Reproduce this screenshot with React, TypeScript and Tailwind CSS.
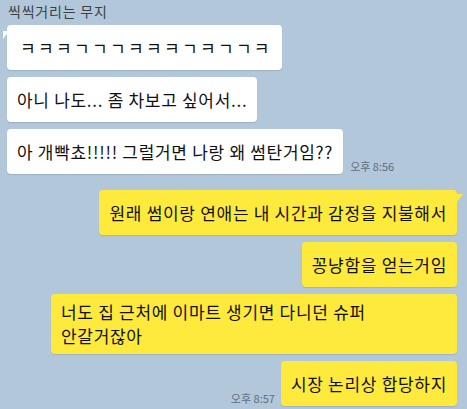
const font = { fontFamily: '"Noto Sans CJK KR", "Noto Sans", sans-serif' };

function TheirBubble({
  text,
  tail,
  className = "",
}: {
  text: string;
  tail?: boolean;
  className?: string;
}) {
  return (
    <div
      className={`relative flex h-[45px] items-center rounded-[4px] bg-white px-[10px] text-[17px] leading-[24px] tracking-[0.7px] text-[#111] shadow-[0_1px_1px_rgba(0,0,0,0.12)] ${className}`}
    >
      {tail && (
        <span className="absolute left-[-4px] top-[6px] h-0 w-0 border-r-[6px] border-t-[8px] border-r-transparent border-t-white" />
      )}
      {text}
    </div>
  );
}

function MyBubble({
  children,
  tail,
  className = "",
}: {
  children: React.ReactNode;
  tail?: boolean;
  className?: string;
}) {
  return (
    <div
      className={`relative rounded-[4px] bg-[#fee93d] px-[10px] text-[17px] leading-[24px] tracking-[0.7px] text-[#111] shadow-[0_1px_1px_rgba(0,0,0,0.1)] ${className}`}
    >
      {tail && (
        <span className="absolute right-[-6px] top-[4px] h-0 w-0 border-l-[7px] border-t-[9px] border-l-transparent border-t-[#fee93d] scale-x-[-1]" />
      )}
      {children}
    </div>
  );
}

export default function App() {
  return (
    <div className="h-[409px] w-[467px] overflow-hidden bg-[#b2c7da]" style={font}>
      <div className="px-[8px] pt-[2px] text-[14px] leading-[19px] tracking-[0.8px] text-[#3b3f44]">씩씩거리는 무지</div>
      <div className="mt-[4px] flex flex-col items-start gap-[7px] pl-[7px]">
        <TheirBubble tail className="!tracking-[2.35px] pl-[13px]" text="ㅋㅋㅋㄱㄱㄱㅋㅋㅋㄱㅋㄱㄱㅋ" />
        <TheirBubble text="아니 나도... 좀 차보고 싶어서..." />
        <div className="flex items-end gap-[7px]">
          <TheirBubble text="아 개빡쵸!!!!! 그럴거면 나랑 왜 썸탄거임??" />
          <span className="mb-[1px] text-[11px] leading-[14px] text-[#5d6e7e]">오후 8:56</span>
        </div>
      </div>
      <div className="mt-[16px] flex flex-col items-end gap-[7px] pr-[10px]">
        <MyBubble tail className="flex h-[45px] items-center">
          원래 썸이랑 연애는 내 시간과 감정을 지불해서
        </MyBubble>
        <MyBubble className="flex h-[45px] items-center">꽁냥함을 얻는거임</MyBubble>
        <MyBubble className="w-[406px] py-[6px]">
          너도 집 근처에 이마트 생기면 다니던 슈퍼
          <br />
          안갈거잖아
        </MyBubble>
        <div className="flex items-end gap-[6px]">
          <span className="mb-[1px] text-[11px] leading-[14px] text-[#5d6e7e]">오후 8:57</span>
          <MyBubble className="flex h-[45px] items-center">시장 논리상 합당하지</MyBubble>
        </div>
      </div>
    </div>
  );
}
